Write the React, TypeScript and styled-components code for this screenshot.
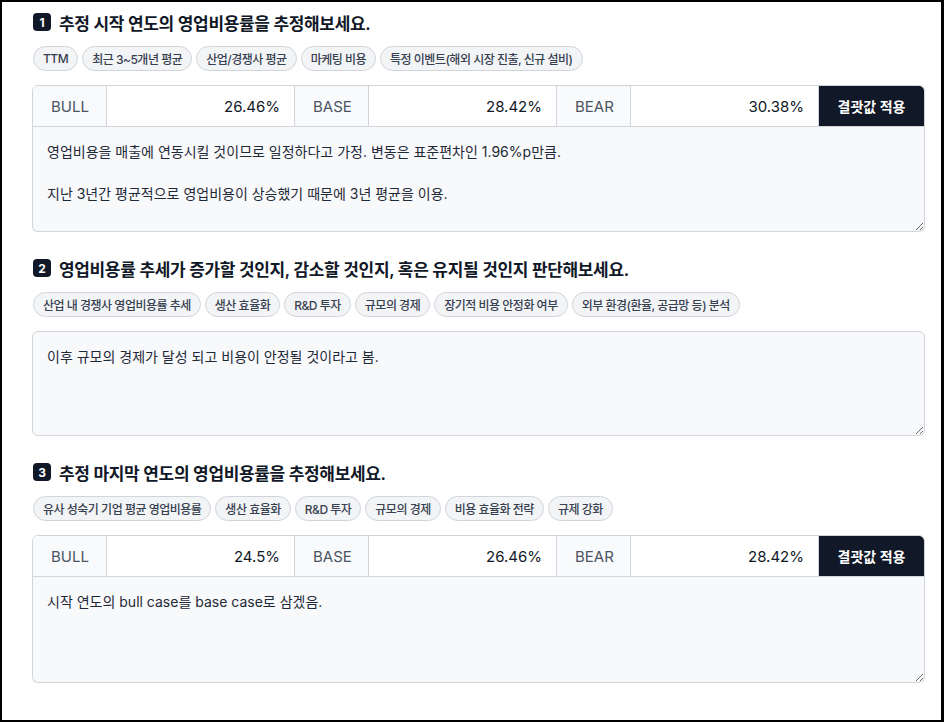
import * as React from "react"
import { styled, createGlobalStyle } from "styled-components"

interface Scenario {
  bull: string
  base: string
  bear: string
}

interface Question {
  title: string
  chips: string[]
  scenario?: Scenario
  note: string
  noteHeight: number
}

const questions: Question[] = [
  {
    title: "추정 시작 연도의 영업비용률을 추정해보세요.",
    chips: [
      "TTM",
      "최근 3~5개년 평균",
      "산업/경쟁사 평균",
      "마케팅 비용",
      "특정 이벤트(해외 시장 진출, 신규 설비)",
    ],
    scenario: { bull: "26.46%", base: "28.42%", bear: "30.38%" },
    note:
      "영업비용을 매출에 연동시킬 것이므로 일정하다고 가정. 변동은 표준편차인 1.96%p만큼.\n\n지난 3년간 평균적으로 영업비용이 상승했기 때문에 3년 평균을 이용.",
    noteHeight: 105,
  },
  {
    title: "영업비용률 추세가 증가할 것인지, 감소할 것인지, 혹은 유지될 것인지 판단해보세요.",
    chips: [
      "산업 내 경쟁사 영업비용률 추세",
      "생산 효율화",
      "R&D 투자",
      "규모의 경제",
      "장기적 비용 안정화 여부",
      "외부 환경(환율, 공급망 등) 분석",
    ],
    note: "이후 규모의 경제가 달성 되고 비용이 안정될 것이라고 봄.",
    noteHeight: 105,
  },
  {
    title: "추정 마지막 연도의 영업비용률을 추정해보세요.",
    chips: [
      "유사 성숙기 기업 평균 영업비용률",
      "생산 효율화",
      "R&D 투자",
      "규모의 경제",
      "비용 효율화 전략",
      "규제 강화",
    ],
    scenario: { bull: "24.5%", base: "26.46%", bear: "28.42%" },
    note: "시작 연도의 bull case를 base case로 삼겠음.",
    noteHeight: 106,
  },
]

export default function App() {
  return (
    <>
      <GlobalStyle />
      <Frame>
        {questions.map((q, index) => (
          <Section key={index}>
            <Heading>
              <Badge>{index + 1}</Badge>
              <span>{q.title}</span>
            </Heading>

            <ChipRow>
              {q.chips.map((chip) => (
                <Chip key={chip}>{chip}</Chip>
              ))}
            </ChipRow>

            <Box>
              {q.scenario && (
                <ScenarioRow>
                  <CaseLabel>BULL</CaseLabel>
                  <CaseInput defaultValue={q.scenario.bull} />
                  <CaseLabel>BASE</CaseLabel>
                  <CaseInput defaultValue={q.scenario.base} />
                  <CaseLabel>BEAR</CaseLabel>
                  <CaseInput defaultValue={q.scenario.bear} />
                  <ApplyButton>결괏값 적용</ApplyButton>
                </ScenarioRow>
              )}
              <Note
                $attached={!!q.scenario}
                style={{ height: q.noteHeight }}
                defaultValue={q.note}
              />
            </Box>
          </Section>
        ))}
      </Frame>
    </>
  )
}

const GlobalStyle = createGlobalStyle`
  * {
    box-sizing: border-box;
  }
  body {
    margin: 0;
    background: #ffffff;
    font-family: "Inter", "Noto Sans CJK KR", sans-serif;
    color: #111827;
  }
`

const Frame = styled.div`
  width: 944px;
  height: 722px;
  border: 2px solid #000000;
  border-right-width: 3px;
  padding: 8px 16px 0 30px;
  display: flex;
  flex-direction: column;
  gap: 24px;
  overflow: hidden;
`

const Section = styled.section`
  display: flex;
  flex-direction: column;
`

const Heading = styled.h2`
  margin: 0;
  display: flex;
  align-items: center;
  gap: 8px;
  height: 24px;
  padding-left: 1px;
  font-size: 17px;
  font-weight: 600;
  color: #111827;
  letter-spacing: -0.35px;
`

const Badge = styled.span`
  display: inline-flex;
  align-items: center;
  justify-content: center;
  width: 18px;
  height: 18px;
  border-radius: 4px;
  background: #111827;
  color: #ffffff;
  font-size: 12px;
  font-weight: 700;
  letter-spacing: 0;
`

const ChipRow = styled.div`
  display: flex;
  flex-wrap: wrap;
  gap: 4px;
  margin-top: 12px;
  padding-left: 1px;
`

const Chip = styled.span`
  display: inline-flex;
  align-items: center;
  height: 25px;
  padding: 0 9px;
  border: 1px solid #d1d5db;
  border-radius: 999px;
  background: #f3f4f6;
  color: #374151;
  font-size: 12px;
  font-weight: 500;
  letter-spacing: -0.5px;
  white-space: nowrap;
`

const Box = styled.div`
  margin-top: 14px;
  display: flex;
  flex-direction: column;
  width: 893px;
`

const ScenarioRow = styled.div`
  display: flex;
  height: 42px;
  border: 1px solid #d1d5db;
  border-radius: 6px 6px 0 0;
  overflow: hidden;
`

const CaseLabel = styled.div`
  flex: 0 0 74px;
  display: flex;
  align-items: center;
  padding-left: 18px;
  background: #f9fafb;
  color: #4b5563;
  font-size: 15px;
  border-right: 1px solid #d1d5db;
`

const CaseInput = styled.input`
  flex: 1 1 0;
  min-width: 0;
  border: none;
  border-right: 1px solid #d1d5db;
  outline: none;
  padding: 0 14px;
  text-align: right;
  font-family: inherit;
  font-size: 15px;
  color: #111827;
  background: #ffffff;
`

const ApplyButton = styled.button`
  flex: 0 0 105px;
  border: none;
  background: #111827;
  color: #ffffff;
  font-family: inherit;
  font-size: 14px;
  font-weight: 600;
  cursor: pointer;
`

const Note = styled.textarea<{ $attached: boolean }>`
  width: 100%;
  resize: vertical;
  border: 1px solid #d1d5db;
  border-top-width: ${(props) => (props.$attached ? 0 : 1)}px;
  border-radius: ${(props) => (props.$attached ? "0 0 6px 6px" : "6px")};
  background: #f8f9fb;
  padding: 14px 14px;
  font-family: inherit;
  font-size: 14px;
  line-height: 21px;
  color: #1f2937;
  outline: none;
`
